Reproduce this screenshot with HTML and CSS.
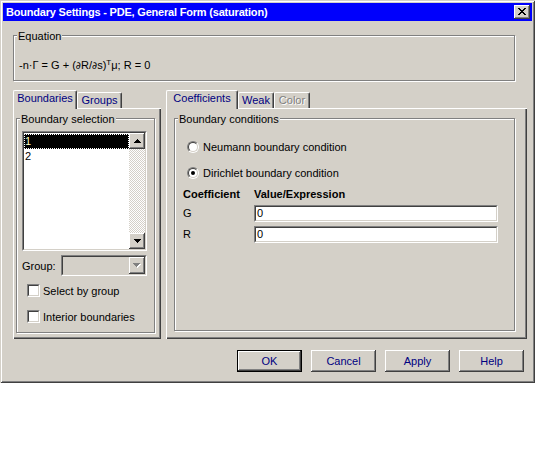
FILE: index.html
```html
<!DOCTYPE html>
<html>
<head>
<meta charset="utf-8">
<link rel="stylesheet" href="styles.css">
</head>
<body>
<div class="win">
  <div class="titlebar">
    <span class="title">Boundary Settings - PDE, General Form (saturation)</span>
    <span class="close"><svg width="8" height="7" viewBox="0 0 8 7" shape-rendering="crispEdges"><path d="M0 0h2v1h1v1h2V1h1V0h2v1H7v1H6v1H5v1h1v1h1v1h1v1H6V6H5V5H3v1H2v1H0V6h1V5h1V4h1V3H2V2H1V1H0z"/></svg></span>
  </div>

  <div class="group eq">
    <div class="glabel">Equation</div>
    <div class="eqtext">-n·Γ = G + (<span class="up">∂</span>R/<span class="up">∂</span>s)<sup>T</sup>μ; R = 0</div>
  </div>

  <div class="tabsrow">
    <div class="tabcol left">
      <div class="tabs">
        <div class="tab active w-bnd">Boundaries</div>
        <div class="tab w-grp">Groups</div>
      </div>
      <div class="panel lpanel">
        <div class="group bsel">
          <div class="glabel">Boundary selection</div>
          <div class="sunk listbox">
            <div class="in lbin">
              <div class="items">
                <div class="item sel">1</div>
                <div class="item">2</div>
              </div>
              <div class="vscroll">
                <div class="raised sbtn"><svg width="7" height="4" viewBox="0 0 7 4" shape-rendering="crispEdges"><path d="M3 0h1v1h1v1h1v1h1v1H0V3h1V2h1V1h1z"/></svg></div>
                <div class="track"></div>
                <div class="raised sbtn"><svg width="7" height="4" viewBox="0 0 7 4" shape-rendering="crispEdges"><path d="M0 0h7v1H6v1H5v1H4v1H3V3H2V2H1V1H0z"/></svg></div>
              </div>
            </div>
          </div>
          <div class="grouprow">
            <span class="glab">Group:</span>
            <div class="sunk combo">
              <div class="in cbin">
                <div class="cfield"></div>
                <div class="raised cbtn"><svg width="8" height="5" viewBox="0 0 8 5" shape-rendering="crispEdges"><path fill="#fff" d="M1 1h7v1H7v1H6v1H5v1H4V4H3V3H2V2H1z"/><path fill="#808080" d="M0 0h7v1H6v1H5v1H4v1H3V3H2V2H1V1H0z"/></svg></div>
              </div>
            </div>
          </div>
          <div class="check c1"><span class="sunk cbox"><span class="in"></span></span><span>Select by group</span></div>
          <div class="check c2"><span class="sunk cbox"><span class="in"></span></span><span>Interior boundaries</span></div>
        </div>
      </div>
    </div>

    <div class="tabcol right">
      <div class="tabs">
        <div class="tab active w-coef">Coefficients</div>
        <div class="tab w-weak">Weak</div>
        <div class="tab disabled w-col">Color</div>
      </div>
      <div class="panel rpanel">
        <div class="group bcond">
          <div class="glabel">Boundary conditions</div>
          <div class="radiorow r1"><span class="radio"><span class="rin"></span></span><span>Neumann boundary condition</span></div>
          <div class="radiorow r2"><span class="radio"><span class="rin"><span class="dot"></span></span></span><span>Dirichlet boundary condition</span></div>
          <div class="coef">
            <div class="hdr">Coefficient</div>
            <div class="hdr">Value/Expression</div>
            <div class="clab">G</div>
            <div class="sunk field"><div class="in fin">0</div></div>
            <div class="clab">R</div>
            <div class="sunk field"><div class="in fin">0</div></div>
          </div>
        </div>
      </div>
    </div>
  </div>

  <div class="buttons">
    <div class="btn default"><div class="raised bin">OK</div></div>
    <div class="btn"><div class="raised bin">Cancel</div></div>
    <div class="btn"><div class="raised bin">Apply</div></div>
    <div class="btn"><div class="raised bin">Help</div></div>
  </div>
</div>
</body>
</html>
```

FILE: styles.css
```css
* { box-sizing: border-box; }

body {
  margin: 0;
  background: #fff;
  font-family: "Liberation Sans", Arial, sans-serif;
  font-size: 11px;
  color: #000;
}

.win {
  width: 535px;
  height: 383px;
  padding: 3px;
  background: #d4d0c8;
  box-shadow: inset 1px 1px #d4d0c8, inset -1px -1px #404040, inset 2px 2px #fff, inset -2px -2px #808080;
  display: flex;
  flex-direction: column;
}

.titlebar {
  height: 18px;
  flex: none;
  background: #0000fc;
  display: flex;
  align-items: center;
  justify-content: space-between;
  padding: 0 2px 0 3px;
}

.title {
  color: #fff;
  font-weight: bold;
  line-height: 13px;
  letter-spacing: -0.2px;
}

.raised {
  background: #d4d0c8;
  box-shadow: inset -1px -1px #404040, inset 1px 1px #fff, inset -2px -2px #808080;
}

.close {
  width: 16px;
  height: 14px;
  background: #d4d0c8;
  box-shadow: inset -1px -1px #404040, inset 1px 1px #fff, inset -2px -2px #808080;
  display: flex;
  align-items: center;
  justify-content: center;
}
.close svg { display: block; margin-top: -1px; }

/* etched group box */
.group {
  border: 1px solid #808080;
  box-shadow: 1px 1px 0 #fff, inset 1px 1px 0 #fff;
}

.glabel {
  margin: -6px 0 0 3px;
  padding: 0 1px;
  background: #d4d0c8;
  line-height: 13px;
  width: max-content;
}

.eq {
  flex: none;
  margin: 14px 0 0 10px;
  width: 502px;
  height: 46px;
}

.eqtext {
  margin: 16px 0 0 5px;
  line-height: 13px;
}

.eqtext .up {
  font-family: "DejaVu Sans", sans-serif;
  font-size: 10px;
}

.eqtext sup {
  font-size: 8px;
  line-height: 0;
  vertical-align: 4px;
}

/* tabs */
.tabsrow {
  display: flex;
  gap: 5px;
  margin: 9px 0 0 10px;
}

.tabcol { display: flex; flex-direction: column; }
.left { width: 148px; }
.right { width: 361px; }

.tabs {
  display: flex;
  align-items: flex-end;
  height: 18px;
}

.tab {
  color: #000080;
  height: 16px;
  padding-top: 1px;
  line-height: 13px;
  text-align: center;
  border-top: 1px solid #fff;
  border-left: 1px solid #fff;
  border-right: 1px solid #404040;
  box-shadow: inset -1px 0 #808080;
  border-radius: 2px 2px 0 0;
}

.tab.active {
  height: 19px;
  margin-bottom: -1px;
  position: relative;
  z-index: 1;
  background: #d4d0c8;
}

.tab.disabled {
  color: #808080;
  text-shadow: 1px 1px 0 #fff;
}

.w-bnd { width: 64px; }
.w-grp { width: 45px; }
.w-coef { width: 72px; }
.w-weak { width: 36px; }
.w-col { width: 36px; }

.panel {
  height: 231px;
  background: #d4d0c8;
  box-shadow: inset 1px 1px #fff, inset -1px -1px #404040, inset -2px -2px #808080;
  display: flex;
  flex-direction: column;
}

.lpanel { padding: 10px 6px 6px 3px; }
.rpanel { padding: 10px 12px 8px 8px; }

.bsel, .bcond { flex: 1; }

/* sunken 2px border */
.sunk {
  border: 1px solid;
  border-color: #808080 #fff #fff #808080;
}
.sunk > .in {
  border: 1px solid;
  border-color: #404040 #d4d0c8 #d4d0c8 #404040;
  height: 100%;
}

.listbox {
  width: 125px;
  height: 120px;
  margin: 5px 0 0 5px;
}

.lbin {
  display: flex;
  background: #fff;
}

.items {
  flex: 1;
  padding-top: 1px;
}

.item {
  line-height: 15px;
  height: 15px;
  padding-left: 1px;
}

.item.sel {
  background: #000;
  color: #ffffc0;
  outline: 1px dotted #fff;
  outline-offset: -1px;
}

.vscroll {
  width: 16px;
  display: flex;
  flex-direction: column;
}

.sbtn {
  height: 16px;
  flex: none;
  display: flex;
  align-items: center;
  justify-content: center;
}

.track {
  flex: 1;
  background: conic-gradient(#fff 25%, #d4d0c8 0 50%, #fff 0 75%, #d4d0c8 0);
  background-size: 2px 2px;
}

.grouprow {
  display: flex;
  align-items: center;
  margin: 4px 0 0 5px;
}

.glab { width: 39px; }

.combo {
  width: 86px;
  height: 21px;
}

.cbin {
  display: flex;
  background: #d4d0c8;
}

.cfield { flex: 1; }

.cbtn {
  width: 16px;
  display: flex;
  align-items: center;
  justify-content: center;
}

.check {
  display: flex;
  align-items: center;
  gap: 3px;
  margin-left: 10px;
  height: 13px;
}
.c1 { margin-top: 8px; }
.c2 { margin-top: 13px; }

.cbox {
  width: 13px;
  height: 13px;
  display: block;
}
.cbox > .in { display: block; background: #fff; }

/* radios */
.radiorow {
  display: flex;
  align-items: center;
  gap: 4px;
  height: 13px;
  margin-left: 12px;
}
.r1 { margin-top: 14px; }
.r2 { margin-top: 13px; }

.radio {
  width: 12px;
  height: 12px;
  border-radius: 50%;
  border: 1px solid;
  border-color: #808080 #fff #fff #808080;
  display: block;
}

.rin {
  width: 10px;
  height: 10px;
  border-radius: 50%;
  border: 1px solid;
  border-color: #404040 #d4d0c8 #d4d0c8 #404040;
  background: #fff;
  display: flex;
  align-items: center;
  justify-content: center;
}

.dot {
  width: 4px;
  height: 4px;
  border-radius: 50%;
  background: #000;
}

/* coefficients table */
.coef {
  display: grid;
  grid-template-columns: 71px 244px;
  row-gap: 4px;
  align-items: center;
  margin: 9px 0 0 8px;
}

.hdr {
  font-weight: bold;
  line-height: 13px;
}

.clab { line-height: 13px; }

.field { height: 17px; }

.fin {
  background: #fff;
  padding-left: 1px;
  line-height: 13px;
}

/* buttons */
.buttons {
  display: flex;
  justify-content: flex-end;
  gap: 9px;
  margin-top: 11px;
  padding-right: 8px;
}

.btn {
  width: 65px;
  height: 22px;
}

.btn.default {
  border: 1px solid #000;
}

.bin {
  height: 100%;
  color: #000080;
  text-align: center;
  line-height: 20px;
}
.btn:not(.default) .bin { line-height: 22px; }
```
